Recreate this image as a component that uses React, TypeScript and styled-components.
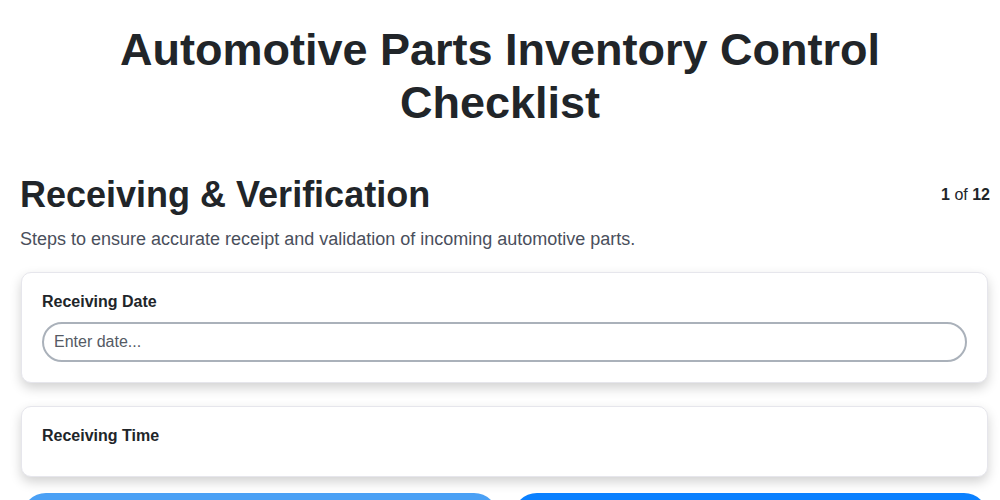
import React from "react";
import styled, { createGlobalStyle } from "styled-components";

const Global = createGlobalStyle`
  html, body { margin: 0; padding: 0; background: #ffffff; }
  body { font-family: "Liberation Sans", Arial, sans-serif; color: #212529; }
  * { box-sizing: border-box; }
`;

const Page = styled.div`
  padding: 23px 10px 40px 20px;
`;

const Title = styled.h1`
  margin: 0 0 45px;
  text-align: center;
  font-size: 45px;
  line-height: 53px;
  font-weight: 700;
  color: #212529;
  padding: 0 105px 0 95px;
`;

const SectionHeader = styled.div`
  display: flex;
  align-items: center;
  justify-content: space-between;
`;

const SectionTitle = styled.h2`
  margin: 0;
  font-size: 36px;
  line-height: 41px;
  font-weight: 700;
  color: #212529;
`;

const Counter = styled.div`
  font-size: 16px;
  color: #212529;
  b { font-weight: 700; }
`;

const Description = styled.p`
  margin: 14px 0 23px;
  font-size: 18px;
  line-height: 20px;
  color: #4a4f5c;
`;

const Card = styled.div`
  background: #fff;
  border: 1px solid #e6e6ec;
  border-radius: 10px;
  padding: 20px 20px;
  box-shadow: 0 5px 12px rgba(0, 0, 0, 0.18);
  margin: 0 2px 23px 1px;
`;

const Label = styled.label`
  display: block;
  font-size: 16px;
  line-height: 18px;
  font-weight: 700;
  color: #212529;
  margin-bottom: 11px;
`;

const Input = styled.input`
  display: block;
  width: 100%;
  height: 40px;
  border: 2px solid #aab1ba;
  border-radius: 20px;
  padding: 0 10px;
  font-family: "Liberation Sans", Arial, sans-serif;
  font-size: 16px;
  color: #212529;
  background: #fff;
  outline: none;
  &::placeholder { color: #555a64; }
`;

const Buttons = styled.div`
  display: grid;
  grid-template-columns: 1fr 1fr;
  gap: 15px;
  margin-top: -7px;
  padding: 0 2px;
`;

const Button = styled.button<{ $primary?: boolean }>`
  height: 48px;
  border: none;
  border-radius: 24px;
  background: ${(p) => (p.$primary ? "#0a80ff" : "#4aa0f5")};
  color: #fff;
  font-family: "Liberation Sans", Arial, sans-serif;
  font-size: 16px;
  font-weight: 700;
`;

export default function App() {
  return (
    <>
      <Global />
      <Page>
        <Title>Automotive Parts Inventory Control Checklist</Title>
        <SectionHeader>
          <SectionTitle>Receiving &amp; Verification</SectionTitle>
          <Counter>
            <b>1</b> of <b>12</b>
          </Counter>
        </SectionHeader>
        <Description>
          Steps to ensure accurate receipt and validation of incoming automotive parts.
        </Description>
        <Card>
          <Label>Receiving Date</Label>
          <Input placeholder="Enter date..." />
        </Card>
        <Card>
          <Label>Receiving Time</Label>
        </Card>
        <Buttons>
          <Button>Previous</Button>
          <Button $primary>Next</Button>
        </Buttons>
      </Page>
    </>
  );
}
